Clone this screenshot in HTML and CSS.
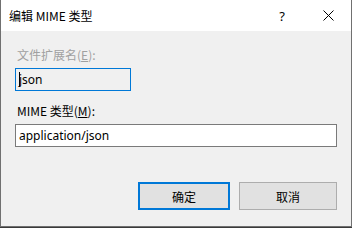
FILE: index.html
```html
<!DOCTYPE html>
<html>
<head>
<meta charset="utf-8">
<link rel="stylesheet" href="styles.css">
</head>
<body>
<div class="window">
  <div class="titlebar">
    <span class="title">编辑 MIME 类型</span>
    <span class="help">?</span>
    <span class="close">
      <svg width="11" height="11" viewBox="0 0 11 11"><path d="M0.5 0.5 L10.5 10.5 M10.5 0.5 L0.5 10.5" stroke="#000" stroke-width="1" fill="none"/></svg>
    </span>
  </div>
  <div class="content">
    <div class="label disabled">文件扩展名(<u>E</u>):</div>
    <div class="input focus small"><span class="caret"></span>json</div>
    <div class="label second">MIME 类型(<u>M</u>):</div>
    <div class="input wide">application/json</div>
    <div class="buttons">
      <div class="btn default">确定</div>
      <div class="btn">取消</div>
    </div>
  </div>
</div>
</body>
</html>
```
FILE: styles.css
```css
html, body {
  margin: 0;
  padding: 0;
  background: #3a3a3a;
}
body {
  font-family: "Noto Sans", "Noto Sans CJK SC", sans-serif;
  font-size: 12px;
  color: #000;
}
.window {
  width: 352px;
  height: 227px;
  box-sizing: border-box;
  border: 1px solid #707070;
  border-top: none;
  background: #f0f0f0;
  display: flex;
  flex-direction: column;
}
.titlebar {
  height: 31px;
  background: #fff;
  display: flex;
  align-items: center;
  padding-left: 8px;
  flex: none;
}
.title {
  font-family: "Noto Sans CJK SC", sans-serif;
  font-size: 12px;
  flex: 1;
}
.help {
  width: 46px;
  text-align: center;
  font-size: 13px;
}
.close {
  width: 46px;
  display: flex;
  justify-content: center;
  align-items: center;
}
.content {
  padding: 16px 14px 0 14px;
  display: flex;
  flex-direction: column;
  align-items: flex-start;
}
.label {
  font-family: "Noto Sans CJK SC", sans-serif;
  line-height: 16px;
  height: 16px;
  padding-left: 2px;
}
.label u {
  text-underline-offset: 1px;
}
.disabled {
  color: #a0a0a0;
}
.second {
  margin-top: 12px;
}
.input {
  margin-top: 5px;
  box-sizing: border-box;
  height: 23px;
  background: #fff;
  border: 1px solid #7a7a7a;
  padding-left: 3px;
  line-height: 20px;
  display: flex;
  align-items: center;
  font-size: 12px;
}
.small {
  width: 116px;
  background: #f0f0f0;
}
.focus {
  border-color: #0078d7;
}
.wide {
  width: 322px;
}
.caret {
  display: inline-block;
  width: 1px;
  height: 15px;
  background: #000;
  margin-right: -1px;
}
.buttons {
  align-self: flex-end;
  margin-top: 35px;
  display: flex;
  gap: 9px;
}
.btn {
  box-sizing: border-box;
  width: 98px;
  height: 28px;
  border: 1px solid #adadad;
  background: #e1e1e1;
  display: flex;
  justify-content: center;
  align-items: center;
  font-family: "Noto Sans CJK SC", sans-serif;
}
.btn.default {
  width: 92px;
  border: 2px solid #0078d7;
}
```
